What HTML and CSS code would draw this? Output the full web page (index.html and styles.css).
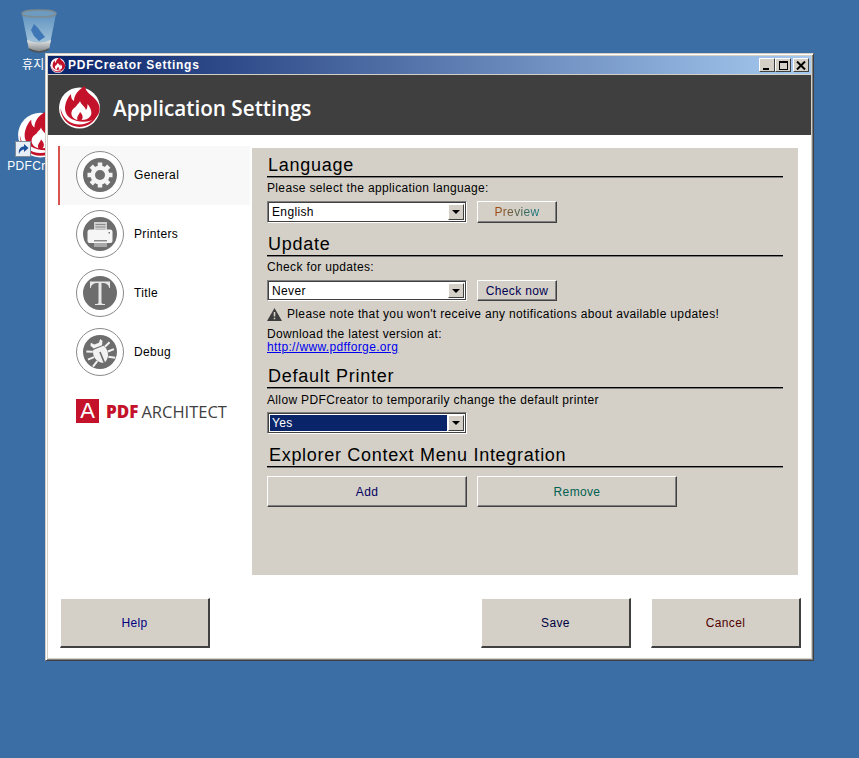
FILE: index.html
```html
<!DOCTYPE html>
<html lang="en">
<head>
  <meta charset="UTF-8" />
  <title>PDFCreator Settings</title>
  <link rel="stylesheet" href="styles.css">
</head>
<body>
  <svg class="defs" width="0" height="0">
    <defs>
      <linearGradient id="binBody" x1="0" y1="0" x2="0" y2="1">
        <stop offset="0" stop-color="#5f93c0"/>
        <stop offset="0.7" stop-color="#9dbfd8"/>
        <stop offset="1" stop-color="#7f9db3"/>
      </linearGradient>
      <linearGradient id="binBowl" x1="0" y1="0" x2="0" y2="1">
        <stop offset="0" stop-color="#e6e8e8"/>
        <stop offset="1" stop-color="#7c8285"/>
      </linearGradient>
    </defs>
    <symbol id="flame" viewBox="0 0 44 44">
      <circle cx="21.500" cy="23" r="20.500" fill="#fff"/>
      <path d="M2.500 23A19 19 0 0 0 40.500 23C38.500 34 30 39.500 21.500 39.500S4.500 34 2.500 23Z" fill="#c4122a"/>
      <path d="M27 1C27 7 34 10 38 15C43 21 43 28 37 33.500C32 37 25 37.500 19 36C11 34 6.500 29 7 22C7.500 17 10 12 13 9C13 13 14 15 16 16C16 10 20 5 27 1Z" fill="#c4122a"/>
      <path d="M22 16C23 20 27 21 28 25C29.500 23 29.500 21 29.500 19C33 23 34.500 28 32.500 31C30.500 34 27 35 23.500 35C26 32 24 29 22 27C21 30 18.500 31 19.500 35C15 34 12 30 14 25.500C15 23 18 22.500 19 20C20 18.500 21.500 18 22 16Z" fill="#fff"/>
    </symbol>
  </svg>

  <div class="desk-icon bin-icon">
    <svg width="38" height="46" viewBox="0 0 38 46">
      <path d="M2 6L9 41Q19 47 29 41L36 6Z" fill="url(#binBody)"/>
      <path d="M7 32L9 41Q19 47 29 41L31 32Q19 37 7 32Z" fill="url(#binBowl)"/>
      <path d="M11 22L14 16L18 20L21 24L25 29L19 33L14 28Z" fill="#3f76b6"/>
      <ellipse cx="19" cy="5.500" rx="17" ry="3.500" fill="#6e9cc0" stroke="#7d8b93" stroke-width="1.500"/>
      <path d="M9 41Q19 47 29 41" fill="none" stroke="#4d5356" stroke-width="1.500"/>
    </svg>
    <span>휴지통</span>
  </div>

  <div class="desk-icon pdf-icon">
    <svg width="48" height="48"><use href="#flame"/></svg>
    <svg class="shortcut" width="16" height="16" viewBox="0 0 16 16">
      <rect x="0.500" y="0.500" width="15" height="15" fill="#e8eef5" stroke="#7f8a96"/>
      <path d="M4 13C3 8 6 5.500 9 5.500V3L13.500 7L9 11V8.500C7 8.500 5 10 4 13Z" fill="#1d4f9c"/>
    </svg>
    <span>PDFCreator</span>
  </div>

  <div class="window">
    <div class="titlebar">
      <svg class="title-logo" width="16" height="16"><use href="#flame"/></svg>
      <span class="title-text">PDFCreator Settings</span>
      <div class="title-buttons">
        <button class="win-btn"><span class="glyph-min"></span></button>
        <button class="win-btn"><span class="glyph-max"></span></button>
        <button class="win-btn close">
          <svg width="10" height="9" viewBox="0 0 10 9"><path d="M1 0.500L9 8.500M9 0.500L1 8.500" stroke="#000" stroke-width="2"/></svg>
        </button>
      </div>
    </div>

    <div class="app-header">
      <svg class="header-logo" width="44" height="44"><use href="#flame"/></svg>
      <h1>Application Settings</h1>
    </div>

    <div class="content">
      <nav class="side-nav">
        <div class="nav-item active">
          <span class="nav-icon">
            <svg width="34" height="34" viewBox="0 0 34 34">
              <circle cx="17" cy="17" r="17" fill="#6d6d6d"/>
              <path d="M17 4.500V29.500M4.500 17H29.500M8.200 8.200L25.800 25.800M25.800 8.200L8.200 25.800" stroke="#f4f4f4" stroke-width="4.500"/>
              <circle cx="17" cy="17" r="9.500" fill="#f4f4f4"/>
              <circle cx="17" cy="17" r="5" fill="#6d6d6d"/>
            </svg>
          </span>
          <span>General</span>
        </div>
        <div class="nav-item">
          <span class="nav-icon">
            <svg width="34" height="34" viewBox="0 0 34 34">
              <circle cx="17" cy="17" r="17" fill="#6d6d6d"/>
              <rect x="11" y="5" width="13" height="11" fill="#cfcfcf"/>
              <path d="M12.500 7.500H22.500M12.500 10H22.500M12.500 12.500H22.500" stroke="#8a8a8a"/>
              <path d="M4.500 15Q4.500 12.500 7 12.500H27Q29.500 12.500 29.500 15V24Q29.500 26 27.500 26H6.500Q4.500 26 4.500 24Z" fill="#f6f6f6"/>
              <rect x="11" y="26" width="13" height="4" fill="#a8a8a8"/>
              <rect x="11" y="23" width="13" height="1.500" fill="#8a8a8a"/>
              <rect x="25.500" y="15" width="1.500" height="1.500" fill="#777"/>
            </svg>
          </span>
          <span>Printers</span>
        </div>
        <div class="nav-item">
          <span class="nav-icon">
            <svg width="34" height="34" viewBox="0 0 34 34">
              <circle cx="17" cy="17" r="17" fill="#6d6d6d"/>
              <path d="M7 5.500H27V12H26.200C25.800 9 24 7 18.500 7V26.500C18.500 27.500 19.500 28 22 28V29H12V28C14.500 28 15.500 27.500 15.500 26.500V7C10 7 8.200 9 7.800 12H7Z" fill="#e8e8e8"/>
            </svg>
          </span>
          <span>Title</span>
        </div>
        <div class="nav-item">
          <span class="nav-icon">
            <svg width="34" height="34" viewBox="0 0 34 34">
              <circle cx="17" cy="17" r="17" fill="#6d6d6d"/>
              <g transform="rotate(-22 17 17)">
                <path d="M12 5L14.500 8H19.500L22 5L23.500 7.500L21.500 11.500L12.500 11.500L10.500 7.500Z" fill="#f2f2f2"/>
                <path d="M11.500 12.500H22.500C25.500 17 25 25 17.800 28.500V17H16.200V28.500C9 25 8.500 17 11.500 12.500Z" fill="#f2f2f2"/>
                <path d="M10.500 14L4.500 11.500M9.500 19.500H3M11 24.500L5 28M23.500 14L29.500 11.500M24.500 19.500H31M23 24.500L29 28" stroke="#f2f2f2" stroke-width="2"/>
              </g>
            </svg>
          </span>
          <span>Debug</span>
        </div>
        <div class="architect">
          <span class="architect-mark">A</span>
          <span class="architect-pdf">PDF</span>
          <span class="architect-name">ARCHITECT</span>
        </div>
      </nav>

      <main class="panel">
        <h2>Language</h2>
        <p class="label">Please select the application language:</p>
        <div class="row">
          <div class="combo"><span class="combo-value">English</span><span class="combo-arrow"></span></div>
          <button class="btn small preview"><span>Preview</span></button>
        </div>

        <h2 class="update-head">Update</h2>
        <p class="label">Check for updates:</p>
        <div class="row short">
          <div class="combo"><span class="combo-value">Never</span><span class="combo-arrow"></span></div>
          <button class="btn small check">Check now</button>
        </div>
        <p class="warning">
          <svg width="15" height="13" viewBox="0 0 15 13">
            <path d="M7.500 0L15 13H0Z" fill="#3d3d3d"/>
            <path d="M6.700 4H8.300V8.500H6.700ZM6.700 9.700H8.300V11.200H6.700Z" fill="#d4d0c8"/>
          </svg>
          Please note that you won't receive any notifications about available updates!
        </p>
        <p class="label download">Download the latest version at:</p>
        <a class="link" href="#">http://www.pdfforge.org</a>

        <h2 class="printer-head">Default Printer</h2>
        <p class="label printer-label">Allow PDFCreator to temporarily change the default printer</p>
        <div class="row printer-row">
          <div class="combo"><span class="combo-value selected">Yes</span><span class="combo-arrow"></span></div>
        </div>

        <h2 class="explorer-head">Explorer Context Menu Integration</h2>
        <div class="row big-row">
          <button class="btn wide add">Add</button>
          <button class="btn wide remove">Remove</button>
        </div>
      </main>
    </div>

    <div class="footer">
      <button class="btn foot help">Help</button>
      <div class="foot-right">
        <button class="btn foot save">Save</button>
        <button class="btn foot cancel">Cancel</button>
      </div>
    </div>
  </div>
</body>
</html>
```

FILE: styles.css
```css
* {
  box-sizing: border-box;
}
body {
  margin: 0;
  height: 758px;
  overflow: hidden;
  position: relative;
  background-color: #3a6ea5;
  font-family: "Liberation Sans", Arial, "Noto Sans CJK KR", sans-serif;
  font-size: 12px;
  letter-spacing: 0.35px;
  color: #000;
}
p, h1, h2 {
  margin: 0;
  font-weight: normal;
}
.defs {
  position: absolute;
}

/* desktop */
.desk-icon {
  position: absolute;
  width: 74px;
  display: flex;
  flex-direction: column;
  align-items: center;
  color: #fff;
}
.bin-icon {
  left: 2px;
  top: 8px;
}
.bin-icon span {
  margin-top: 1px;
}
.pdf-icon {
  left: 4px;
  top: 110px;
}
.pdf-icon span {
  margin-top: 1px;
}
.shortcut {
  position: absolute;
  left: 11px;
  top: 31px;
}

/* window */
.window {
  position: absolute;
  left: 45px;
  top: 53px;
  width: 769px;
  height: 608px;
  display: flex;
  flex-direction: column;
  padding: 2px;
  background-color: #d4d0c8;
  border: 1px solid;
  border-color: #d4d0c8 #404040 #404040 #d4d0c8;
  box-shadow: inset 1px 1px 0 #fff, inset -1px -1px 0 #808080;
}
.titlebar {
  height: 18px;
  flex-shrink: 0;
  margin-bottom: 1px;
  display: flex;
  align-items: center;
  padding: 0 2px 0 2px;
  background: linear-gradient(to right, #0a246a, #a6caf0);
  color: #fff;
  font-weight: bold;
  letter-spacing: 0.75px;
}
.title-logo {
  margin-right: 2px;
}
.title-text {
  flex: 1;
}
.title-buttons {
  display: flex;
}
.win-btn {
  width: 16px;
  height: 14px;
  padding: 0;
  display: flex;
  align-items: center;
  justify-content: center;
  background-color: #d4d0c8;
  border: 1px solid;
  border-color: #fff #404040 #404040 #fff;
}
.win-btn.close {
  margin-left: 2px;
}
.glyph-min {
  width: 6px;
  height: 2px;
  margin-top: 7px;
  margin-right: 2px;
  background-color: #000;
}
.glyph-max {
  width: 9px;
  height: 9px;
  border: 1px solid #000;
  border-top-width: 2px;
}
.app-header {
  height: 60px;
  flex-shrink: 0;
  display: flex;
  align-items: center;
  padding-left: 10px;
  background-color: #3f3f3f;
}
.header-logo {
  margin-top: 4px;
}
.app-header h1 {
  margin: 6px 0 0 11px;
  font-family: "Open Sans", sans-serif;
  font-weight: 600;
  font-size: 20.700px;
  letter-spacing: 0;
  color: #fff;
}

/* body of the dialog */
.content {
  height: 440px;
  flex-shrink: 0;
  display: flex;
  padding: 11px 13px 0 10px;
  background-color: #fff;
}
.side-nav {
  width: 192px;
  margin-right: 2px;
  flex-shrink: 0;
}
.nav-item {
  height: 59px;
  display: flex;
  align-items: center;
  gap: 10px;
  padding: 0 0 2px 18px;
}
.nav-item.active {
  background-color: #f8f8f8;
  border-left: 2px solid #d9534f;
  padding-left: 16px;
}
.nav-icon {
  width: 48px;
  height: 48px;
  display: flex;
  align-items: center;
  justify-content: center;
  border: 1px solid #8a8a8a;
  border-radius: 50%;
  background-color: #fff;
}
.architect {
  display: flex;
  align-items: center;
  margin-top: 17px;
  padding-left: 18px;
  letter-spacing: 0;
}
.architect-mark {
  width: 23px;
  height: 24px;
  margin-right: 7px;
  background-color: #c4122a;
  color: #fff;
  font-size: 22px;
  line-height: 24px;
  text-align: center;
}
.architect-pdf {
  color: #c4122a;
  font-family: "Open Sans", sans-serif;
  font-weight: 800;
  font-size: 17px;
  margin-right: 3px;
}
.architect-name {
  color: #3f3f3f;
  font-family: "Open Sans", sans-serif;
  font-size: 16.500px;
  letter-spacing: 0;
}

.panel {
  width: 546px;
  height: 427px;
  margin-top: 2px;
  padding: 5px 15px 0;
  background-color: #d4d0c8;
}
h2 {
  height: 24px;
  padding-left: 1px;
  font-size: 18px;
  line-height: 24px;
  letter-spacing: 0.75px;
  border-bottom: 1px solid #000;
  box-shadow: 0 1px 0 #7a7a7a;
}
.label {
  margin-top: 4px;
  height: 15px;
  line-height: 15px;
}
.row {
  display: flex;
  gap: 10px;
  margin-top: 5px;
}
.combo {
  width: 200px;
  height: 22px;
  display: flex;
  align-items: stretch;
  padding: 2px;
  background-color: #fff;
  border: 1px solid;
  border-color: #808080 #fff #fff #808080;
  box-shadow: inset 0 0 0 1px #404040;
}
.short .combo, .short .btn {
  height: 21px;
}
.combo-value {
  flex: 1;
  padding: 1px 2px;
  line-height: 14px;
  background-color: #fff;
}
.combo-value.selected {
  background-color: #0a246a;
  color: #fff;
  margin-right: 1px;
}
.combo-arrow {
  width: 16px;
  position: relative;
  background-color: #d4d0c8;
  border: 1px solid;
  border-color: #fff #404040 #404040 #fff;
}
.combo-arrow::after {
  content: "";
  position: absolute;
  left: 3px;
  top: 5px;
  border-style: solid;
  border-width: 4px 4px 0;
  border-color: #000 transparent transparent;
}
.btn {
  padding: 0;
  font: inherit;
  letter-spacing: inherit;
  background-color: #d4d0c8;
  border: 1px solid;
  border-color: #fff #404040 #404040 #fff;
  box-shadow: inset -1px -1px 0 #808080;
}
.small {
  width: 80px;
  height: 22px;
}
.wide {
  width: 200px;
  height: 31px;
}
.foot {
  width: 150px;
  height: 50px;
  border-width: 1px 2px 2px 1px;
  box-shadow: none;
  border-color: #fff #404040 #404040 #fff;
}
.preview span {
  background: linear-gradient(to right, #a8480a, #0a7a86);
  -webkit-background-clip: text;
  background-clip: text;
  color: transparent;
}
.check { color: #000050; }
.add { color: #000060; }
.remove { color: #006050; }
.help { color: #000080; }
.save { color: #000040; }
.cancel { color: #500000; }

.update-head {
  margin-top: 9px;
}
.warning {
  margin-top: 5px;
  height: 16px;
  display: flex;
  align-items: center;
  gap: 5px;
}
.download {
  margin-top: 5px;
  height: 14px;
  line-height: 14px;
}
.link {
  display: block;
  height: 12px;
  line-height: 12px;
  color: #0000ee;
}
.printer-head {
  margin-top: 11px;
}
.printer-label {
  margin-top: 5px;
}
.printer-row {
  margin-top: 4px;
}
.explorer-head {
  margin-top: 9px;
  padding-left: 2px;
  letter-spacing: 0.7px;
}
.big-row {
  margin-top: 9px;
}

.footer {
  flex: 1;
  display: flex;
  justify-content: space-between;
  padding: 23px 10px 0 12px;
  background-color: #fff;
}
.foot-right {
  display: flex;
  gap: 20px;
}
```
